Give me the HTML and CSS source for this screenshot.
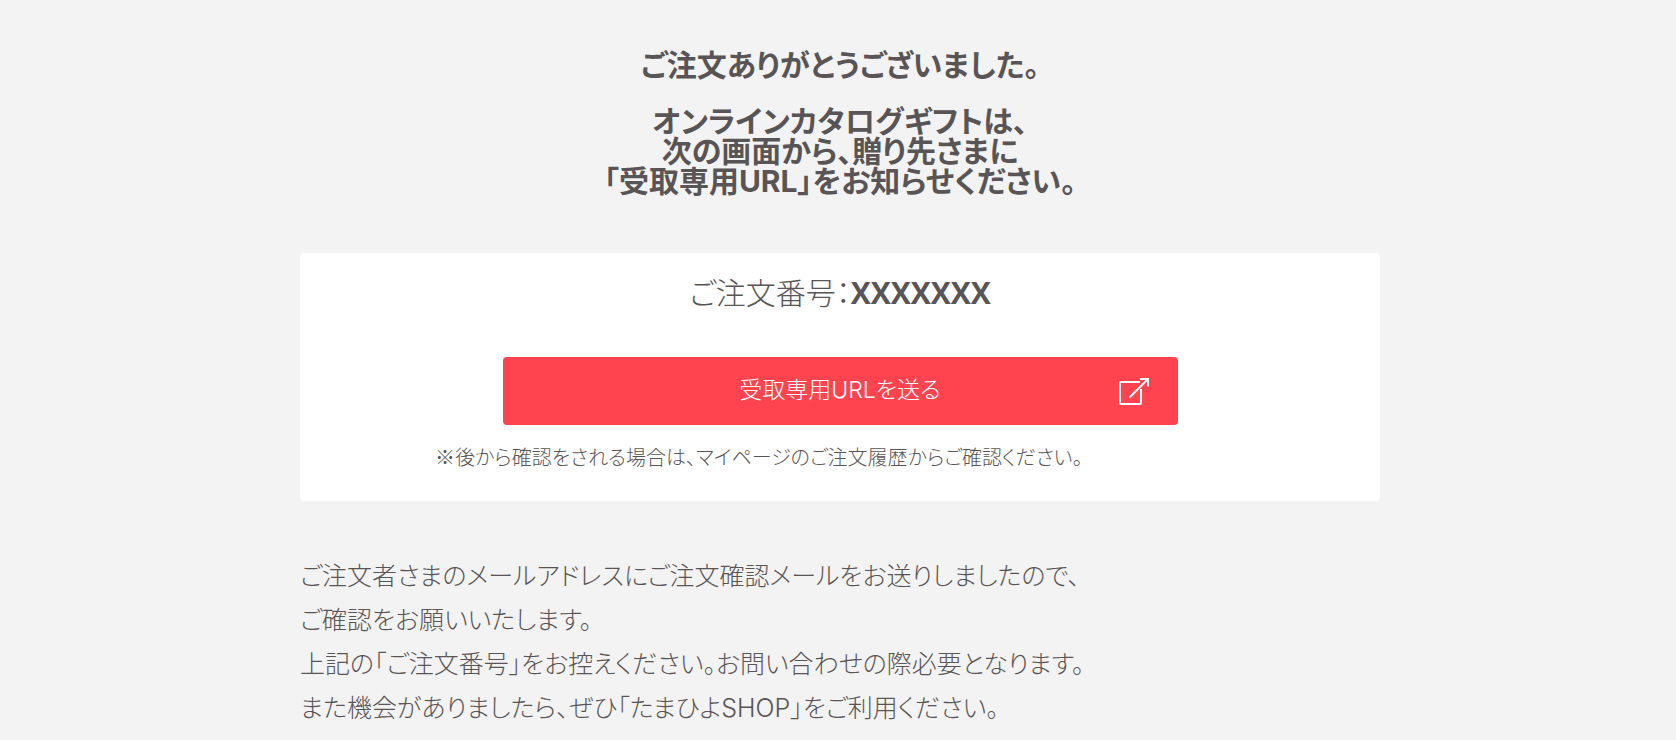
FILE: index.html
```
<!DOCTYPE html>
<html lang="ja">
<head>
    <meta charset="UTF-8">
    <meta name="viewport" content="width=device-width, initial-scale=1.0">
    <title>ご注文完了</title>
    <link rel="stylesheet" href="styles.css">
</head>
<body>
    <main class="container">
        <h1>ご注文ありがとうございました。</h1>
        <h2>オンラインカタログギフトは、<br>次の画面から、贈り先さまに<br>「受取専用URL」をお知らせください。</h2>

        <section class="order-box">
            <p class="order-number">ご注文番号：<strong>XXXXXXX</strong></p>
            <a class="send-button" href="#">
                <span>受取専用URLを送る</span>
                <svg class="send-icon" viewBox="0 0 32 28" width="32" height="28" fill="none" stroke="#fff" stroke-width="2" aria-hidden="true">
                    <path d="M22 5H3Q2 5 2 6V26Q2 27 3 27H22Q23 27 23 26V12"/>
                    <path d="M11.500 20.500L29.500 2.500M22 2H30V9.500"/>
                </svg>
            </a>
            <p class="note">※後から確認をされる場合は、マイページのご注文履歴からご確認ください。</p>
        </section>

        <p class="message">
            ご注文者さまのメールアドレスにご注文確認メールをお送りしましたので、<br>
            ご確認をお願いいたします。<br>
            上記の「ご注文番号」をお控えください。お問い合わせの際必要となります。<br>
            また機会がありましたら、ぜひ「たまひよSHOP」をご利用ください。
        </p>
    </main>
</body>
</html>
```
FILE: styles.css
```
body {
    margin: 0;
    padding-left: 4px;
    background-color: #f3f3f3;
    color: #595455;
    font-family: Inter, "Noto Sans CJK JP", sans-serif;
    font-weight: 300;
    font-feature-settings: "palt";
}
.container {
    max-width: 1080px;
    margin: 0 auto;
    padding-top: 50px;
}
h1,
h2 {
    margin: 0;
    font-size: 30px;
    font-weight: 700;
    line-height: 30px;
    text-align: center;
}
h2 {
    margin-top: 26px;
}
.order-box {
    margin-top: 57px;
    padding: 20px 0 28px;
    background: #fff;
    border-radius: 4px;
}
.order-number {
    margin: 0;
    font-size: 30px;
    line-height: 40px;
    text-align: center;
}
.order-number strong {
    font-family: "Open Sans", sans-serif;
    font-weight: 700;
}
.send-button {
    position: relative;
    display: flex;
    align-items: center;
    justify-content: center;
    box-sizing: border-box;
    width: 62.5%;
    height: 68px;
    margin: 44px auto 0;
    padding-bottom: 6px;
    border-radius: 4px;
    background-color: #ff444f;
    color: #fff;
    font-size: 23px;
    text-decoration: none;
}
.send-icon {
    position: absolute;
    top: 20px;
    right: 28px;
}
.note {
    margin: 16px 12.5% 0;
    font-family: "Noto Sans CJK JP", sans-serif;
    font-size: 20px;
    line-height: 32px;
}
.message {
    margin: 53px 0 0;
    font-size: 25px;
    line-height: 44px;
}
```
